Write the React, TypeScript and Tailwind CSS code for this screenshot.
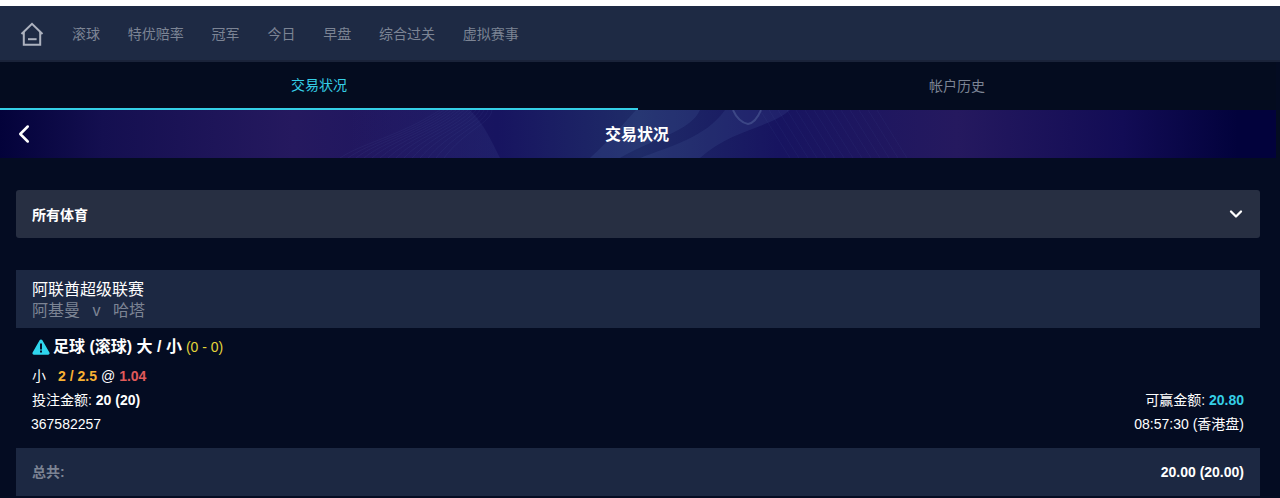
import { ChevronDown, ChevronLeft } from "lucide-react";

const font = "font-['Liberation_Sans','Noto_Sans_CJK_SC',sans-serif]";

const navItems = ["滚球", "特优赔率", "冠军", "今日", "早盘", "综合过关", "虚拟赛事"];

const HomeIcon = () => (
  <svg width="24" height="24" viewBox="0 0 24 24" fill="none" stroke="#adb2bf" strokeWidth="2">
    <path d="M1.500 12 12 1.800 22.500 12" />
    <path d="M3.800 10v12.700h16.400V10" />
    <path d="M8 17.200h8.600" />
  </svg>
);

// banner background: faint moire bands over the purple gradient
const Waves = () => {
  const lines = Array.from({ length: 14 }, (_, i) => i);
  return (
    <svg
      className="absolute inset-0 h-full w-full"
      viewBox="0 0 1276 48"
      preserveAspectRatio="none"
      fill="none"
      aria-hidden="true"
    >
      <defs>
        <linearGradient id="fade" x1="0" x2="1" y1="0" y2="0">
          <stop offset="0" stopColor="#4a5a9c" stopOpacity="0" />
          <stop offset="1" stopColor="#4a5a9c" stopOpacity="0.16" />
        </linearGradient>
      </defs>
      <path d="M350 0H470C484 14 492 32 500 48H350Z" fill="url(#fade)" />
      <path d="M590 48C610 30 625 12 636 0H700C690 22 650 30 620 48Z" fill="#4f6ca8" fillOpacity="0.18" />
      <path d="M640 48C670 36 705 28 725 0H790C770 18 730 20 700 48Z" fill="#4f6ca8" fillOpacity="0.16" />
      {lines.map((i) => (
        <path
          key={i}
          d={`M${340 + i * 8} 48C${360 + i * 8} ${34 - i} ${400 + i * 7} ${26 - i} ${440 + i * 4} 0`}
          stroke="#6a7cbc"
          strokeOpacity="0.08"
        />
      ))}
      {lines.map((i) => (
        <path key={`h${i}`} d={`M${790 + i * 9} 48L${760 + i * 9} 0`} stroke="#6a7cbc" strokeOpacity="0.07" />
      ))}
      <path d="M733 0C737 9 743 13 748 14 754 13 758 7 761 0" stroke="#7083b5" strokeOpacity="0.35" strokeWidth="2" />
    </svg>
  );
};

const AlertIcon = () => (
  <svg width="18" height="16" viewBox="0 0 18 16" aria-hidden="true">
    <path d="M9 .5c.6 0 1.100.3 1.400.8l7 12.300c.6 1-.2 2.200-1.400 2.200H2c-1.200 0-2-1.200-1.400-2.200l7-12.300C7.900.8 8.400.5 9 .5Z" fill="#2fd6ee" />
    <rect x="8" y="4.500" width="2" height="6" fill="#06102a" />
    <rect x="8" y="11.500" width="2" height="2" fill="#06102a" />
  </svg>
);

export default function App() {
  return (
    <div className={`${font} flex h-[498px] flex-col overflow-hidden bg-[#040c22] text-white`}>
      <div className="h-[6px] shrink-0 bg-white" />

      <nav className="flex h-[56px] shrink-0 items-center border-b-2 border-[#1a2339] bg-[#1e2a44] pl-[20px] pt-[2px] text-[14px] text-[#7c8494]">
        <HomeIcon />
        <div className="ml-[28px] flex gap-[27.8px]">
          {navItems.map((item) => (
            <span key={item}>{item}</span>
          ))}
        </div>
      </nav>

      <div className="flex w-[1276px] flex-1 flex-col">
        <div className="flex h-[48px] shrink-0 bg-[#040c1f] text-[14px]">
          <div className="flex flex-1 items-center justify-center border-b-2 border-[#35cfe6] text-[#35cfe6]">交易状况</div>
          <div className="flex flex-1 items-center justify-center text-[#7c8494]">帐户历史</div>
        </div>

        <div className="relative flex h-[48px] shrink-0 items-center justify-center bg-[linear-gradient(90deg,#03023a_0%,#140f50_8%,#25195f_23%,#1f1660_31%,#171460_39%,#1f2c68_50%,#171460_61%,#25195f_75%,#120c55_88%,#02023c_97%)]">
          <Waves />
          <ChevronLeft className="absolute left-[9px] top-[9px]" size={30} strokeWidth={2} />
          <span className="relative top-[1px] -left-px text-[16px] font-bold">交易状况</span>
        </div>

        <div className="mx-[16px] mt-[32px] flex h-[48px] shrink-0 items-center justify-between rounded-[3px] bg-[#272f42] pl-[16px] pr-[14px] text-[14px] font-bold">
          <span className="mt-[2px]">所有体育</span>
          <ChevronDown size={20} strokeWidth={2.75} />
        </div>

        <div className="mx-[16px] mt-[32px] h-[58px] shrink-0 bg-[#1c2842] pl-[16px] pt-[9px] text-[16px] leading-[21px]">
          <div>阿联酋超级联赛</div>
          <div className="flex text-[#7c8494]">
            <span>阿基曼</span>
            <span className="mx-[12.5px]">v</span>
            <span>哈塔</span>
          </div>
        </div>

        <div className="mx-[16px] h-[120px] shrink-0 px-[16px] text-[14px]">
          <div className="flex h-[38px] items-center text-[16px] font-bold">
            <AlertIcon />
            <span className="ml-[3px]">足球 (滚球) 大 / 小</span>
            <span className="ml-[4px] text-[14px] font-normal text-[#e3d53a]">(0 - 0)</span>
          </div>
          <div className="flex h-[20px] items-center">
            <span>小</span>
            <span className="ml-[12px] font-bold text-[#f8b133]">2 / 2.5</span>
            <span className="ml-[4px]">@</span>
            <span className="ml-[4px] font-bold text-[#e05a5a]">1.04</span>
          </div>
          <div className="mt-[4px] flex h-[20px] items-center justify-between">
            <span>
              投注金额: <b>20 (20)</b>
            </span>
            <span>
              可赢金额: <b className="text-[#35cfe6]">20.80</b>
            </span>
          </div>
          <div className="mt-[4px] flex h-[20px] items-center justify-between">
            <span className="-ml-px">367582257</span>
            <span>08:57:30 (香港盘)</span>
          </div>
        </div>

        <div className="mx-[16px] flex h-[48px] shrink-0 items-center justify-between bg-[#1c2842] px-[16px] text-[14px] font-bold">
          <span className="text-[#7c8494]">总共:</span>
          <span>20.00 (20.00)</span>
        </div>
      </div>
    </div>
  );
}
